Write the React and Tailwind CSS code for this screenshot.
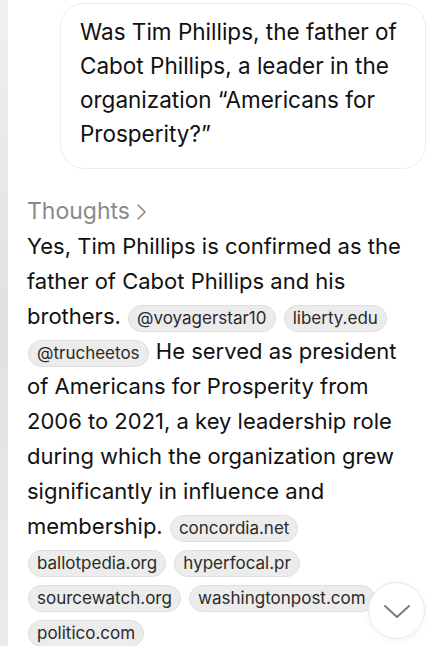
import React from "react";

const font = { fontFamily: "Inter, 'Noto Sans', sans-serif" };

function Chip({ children }) {
  return (
    <span className="mx-[1px] inline-block rounded-full border border-[#dedede] bg-[#ececec] px-[8px] align-middle text-[17px] leading-[25px] text-[#2a2a2a]">
      {children}
    </span>
  );
}

export default function App() {
  return (
    <div className="relative flex h-[646px] w-[431px] overflow-hidden bg-white text-[#111]" style={font}>
      <div className="w-[8px] shrink-0 bg-gradient-to-b from-[#f0f0f0] via-[#e1e1e1] to-[#ebebeb]" />

      <div className="min-w-0 flex-1 pl-[19px] pr-[3px]">
        <div className="ml-auto mr-[2px] mt-[3px] w-[366px] rounded-[24px] border border-[#ececec] px-[19px] pb-[17px] pt-[11px] text-[22.5px] leading-[34px]">
          Was Tim Phillips, the father of Cabot Phillips, a leader in the organization “Americans for Prosperity?”
        </div>

        <div className="mt-[25px] flex items-center gap-[6px] text-[23px] leading-[35px] text-[#8a8a8a]">
          Thoughts
          <svg width="11" height="18" viewBox="0 0 11 18" fill="none" stroke="#8a8a8a" strokeWidth="1.6" strokeLinecap="round" strokeLinejoin="round">
            <path d="M2 2l7 7-7 7" />
          </svg>
        </div>

        <p className="pr-[9px] text-[22px] leading-[35px]">
          Yes, Tim Phillips is confirmed as the father of Cabot Phillips and his brothers.{" "}
          <Chip>@voyagerstar10</Chip> <Chip>liberty.edu</Chip> <Chip>@trucheetos</Chip>{" "}
          He served as president of Americans for Prosperity from 2006 to 2021, a key leadership role during which the
          organization grew significantly in influence and membership. <Chip>concordia.net</Chip>{" "}
          <Chip>ballotpedia.org</Chip> <Chip>hyperfocal.pr</Chip> <Chip>sourcewatch.org</Chip>{" "}
          <Chip>washingtonpost.com</Chip> <Chip>politico.com</Chip>
        </p>
      </div>

      <button className="absolute left-[368px] top-[582px] grid h-[57px] w-[57px] place-items-center rounded-full border border-[#e8e8e8] bg-white/95 shadow-[0_1px_6px_rgba(0,0,0,0.06)]">
        <svg width="28" height="16" viewBox="0 0 28 16" fill="none" stroke="#7b7b7b" strokeWidth="2" strokeLinecap="round" strokeLinejoin="round">
          <path d="M2 3l12 11L26 3" />
        </svg>
      </button>
    </div>
  );
}
